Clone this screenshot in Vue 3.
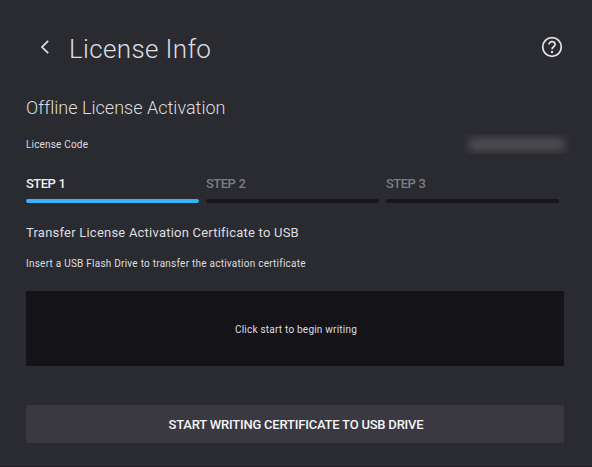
<script setup>
const steps = [
  { label: 'STEP 1', active: true },
  { label: 'STEP 2', active: false },
  { label: 'STEP 3', active: false },
]
</script>

<template>
  <main class="screen">
    <header class="header">
      <svg class="back" viewBox="0 0 10 16" aria-label="Back">
        <path d="M8.2 1.8 2 8l6.2 6.2" />
      </svg>
      <h1 class="title">License Info</h1>
      <svg class="help" viewBox="0 0 22 22" aria-label="Help">
        <circle cx="11" cy="11" r="9.3" />
        <path d="M7.9 8.6c0-1.7 1.3-2.9 3.1-2.9s3.1 1.1 3.1 2.7c0 2.2-3.1 2.5-3.1 4.8" />
        <circle class="dot" cx="11" cy="16" r="1.2" />
      </svg>
    </header>

    <h2 class="subtitle">Offline License Activation</h2>

    <div class="code-row">
      <span class="code-label">License Code</span>
      <span class="code-mask"><span class="code-smudge"></span></span>
    </div>

    <ol class="steps">
      <li v-for="step in steps" :key="step.label" class="step" :class="{ active: step.active }">
        <span class="step-label">{{ step.label }}</span>
        <span class="step-bar"></span>
      </li>
    </ol>

    <h3 class="task">Transfer License Activation Certificate to USB</h3>
    <p class="hint">Insert a USB Flash Drive to transfer the activation certificate</p>

    <section class="status"><span class="status-text">Click start to begin writing</span></section>
    <button class="start"><span class="start-text">START WRITING CERTIFICATE TO USB DRIVE</span></button>
  </main>
</template>

<style>
body {
  background: #2a2b30;
}
</style>

<style scoped>
.screen {
  box-sizing: border-box;
  height: 467px;
  padding: 32px 28px 0 26px;
  display: flex;
  flex-direction: column;
  background: #2a2b30;
  border-bottom: 1px solid #211f28;
  color: #dedee0;
  font-family: Roboto, "Liberation Sans", sans-serif;
  font-variant-ligatures: none;
  overflow: hidden;
}
h1, h2, h3, p, ol {
  margin: 0;
  padding: 0;
  font-weight: 400;
}
.header {
  display: flex;
  align-items: center;
  height: 32px;
  padding-left: 14px;
}
.back {
  width: 10px;
  height: 16px;
  margin-top: -2px;
}
.back path,
.help path,
.help circle {
  fill: none;
  stroke: #e2e2e4;
  stroke-width: 1.7;
}
.title {
  margin: 1px 0 0 19px;
  font-size: 26px;
  line-height: 32px;
  font-weight: 300;
  letter-spacing: 0.35px;
  white-space: nowrap;
}
.help {
  width: 22px;
  height: 22px;
  margin: -2px 1px 0 auto;
}
.help .dot {
  fill: #e2e2e4;
  stroke: none;
}
.subtitle {
  margin-top: 32px;
  font-size: 18px;
  line-height: 24px;
  font-weight: 300;
  letter-spacing: 0.02px;
}
.code-row {
  display: flex;
  justify-content: space-between;
  height: 20px;
  margin: 14px -6px 0 0;
}
.code-label {
  padding-top: 1px;
  font-size: 10px;
  line-height: 20px;
  letter-spacing: 0.18px;
}
.code-mask {
  width: 106px;
  height: 20px;
  display: flex;
  align-items: center;
  justify-content: center;
  overflow: hidden;
}
.code-smudge {
  width: 96px;
  height: 13px;
  border-radius: 4px;
  background: #4e4d52;
  filter: blur(4px);
}
.steps {
  display: flex;
  gap: 7px;
  margin: 22px 5px 0 0;
  list-style: none;
}
.step {
  flex: 1;
  display: flex;
  flex-direction: column;
  gap: 7px;
}
.step-label {
  font-size: 13px;
  line-height: 16px;
  font-weight: 500;
  letter-spacing: -0.55px;
  word-spacing: 0.5px;
  color: #7d7e83;
}
.step-bar {
  height: 4px;
  border-radius: 2px;
  background: #17171b;
}
.active .step-label {
  color: #f0f0f2;
}
.active .step-bar {
  background: #36b3fb;
}
.task {
  margin-top: 21px;
  font-size: 13px;
  line-height: 18px;
  letter-spacing: 0.22px;
}
.hint {
  margin-top: 15px;
  font-size: 10px;
  line-height: 14px;
  letter-spacing: 0.24px;
}
.status {
  height: 75px;
  margin-top: 20px;
  display: flex;
  align-items: center;
  justify-content: center;
  background: #141318;
}
.status-text {
  padding: 2px 0 0 2px;
  font-size: 10px;
  letter-spacing: 0.22px;
}
.start {
  height: 38px;
  margin-top: 39px;
  padding: 0 0 0 2px;
  border: 0;
  border-radius: 3px 1px 1px 3px;
  background: #3a3841;
  color: #f5f5f7;
  font: 500 13px Roboto, "Liberation Sans", sans-serif;
  letter-spacing: -0.21px;
}
</style>
